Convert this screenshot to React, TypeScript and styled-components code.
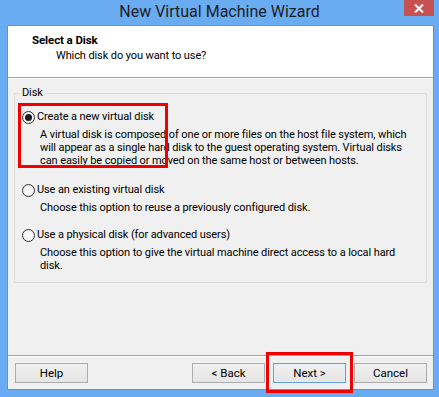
import React from "react"
import styled, { createGlobalStyle } from "styled-components"

const FONT = `"Segoe UI", Roboto, "Liberation Sans", sans-serif`

const GlobalStyle = createGlobalStyle`
  html, body {
    margin: 0;
    padding: 0;
    background: #6aacf2;
  }
  body {
    font-family: ${FONT};
    font-size: 11px;
    letter-spacing: -0.1px;
    color: #000;
  }
`

const Frame = styled.div`
  width: 439px;
  height: 397px;
  box-sizing: border-box;
  display: flex;
  flex-direction: column;
  padding: 0 5px 7px 7px;
  background: #6aacf2;
  overflow: hidden;
`

const TitleBar = styled.div`
  height: 25px;
  flex: none;
  display: grid;
  grid-template-columns: 1fr auto 1fr;
  align-items: start;
  margin-right: -5px;
  margin-left: -7px;
`

const Title = styled.div`
  grid-column: 2;
  font-size: 16px;
  letter-spacing: 0;
  line-height: 24px;
  color: #1e1e1e;
`

const CloseButton = styled.div`
  grid-column: 3;
  justify-self: end;
  margin-right: 5px;
  width: 30px;
  height: 16px;
  background: #c75050;
  display: flex;
  align-items: center;
  justify-content: center;
`

const Client = styled.div`
  flex: 1;
  display: flex;
  flex-direction: column;
  border: 1px solid #5a96da;
  background: #f0f0f0;
`

const Header = styled.div`
  height: 52px;
  flex: none;
  box-sizing: border-box;
  padding: 6px 0 0 24px;
  background: #fff;
  border-bottom: 1px solid #a0a0a0;
  box-shadow: 0 1px 0 #fff;
  margin-bottom: 1px;
`

const HeaderTitle = styled.div`
  font-weight: bold;
  font-size: 11.5px;
  line-height: 16px;
`

const HeaderSub = styled.div`
  line-height: 16px;
  padding-left: 24px;
`

const Body = styled.div`
  flex: 1;
  padding: 6px 6px 0 6px;
`

const GroupBox = styled.fieldset`
  margin: 0;
  padding: 8px 8px 10px 7px;
  height: 198px;
  box-sizing: border-box;
  border: 1px solid #dcdcdc;
  min-width: 0;
`

const Legend = styled.legend`
  padding: 0 2px;
  margin-left: -2px;
  line-height: 16px;
`

const Option = styled.div<{ $gap?: number }>`
  position: relative;
  margin-top: ${p => p.$gap ?? 0}px;
`

const OptionLabel = styled.div`
  display: flex;
  align-items: center;
  gap: 2px;
  height: 16px;
  line-height: 16px;
  white-space: nowrap;
`

const Radio = styled.span<{ $checked?: boolean }>`
  width: 13px;
  height: 13px;
  flex: none;
  box-sizing: border-box;
  border-radius: 50%;
  border: 1px solid #333;
  background: radial-gradient(circle, #fff 0%, #f4f4f4 60%, #dcdcdc 100%);
  display: flex;
  align-items: center;
  justify-content: center;

  &::after {
    content: "";
    display: ${p => (p.$checked ? "block" : "none")};
    width: 7px;
    height: 7px;
    border-radius: 50%;
    background: #1a1a1a;
  }
`

const Description = styled.div`
  margin-top: 3px;
  padding-left: 18px;
  line-height: 13px;
  white-space: nowrap;
`

const Highlight = styled.div<{ $t: number; $l: number; $w: number; $h: number }>`
  position: absolute;
  top: ${p => p.$t}px;
  left: ${p => p.$l}px;
  width: ${p => p.$w}px;
  height: ${p => p.$h}px;
  box-sizing: border-box;
  border: 3px solid #ee0000;
  pointer-events: none;
`

const Footer = styled.div`
  flex: none;
  display: flex;
  align-items: center;
  gap: 8px;
  padding: 7px 6px 6px 7px;
  border-top: 1px solid #a0a0a0;
  box-shadow: inset 0 1px 0 #fff;
`

const Spacer = styled.div`
  flex: 1;
`

const ButtonWrap = styled.div`
  position: relative;
`

const Button = styled.button<{ $default?: boolean }>`
  width: 73px;
  height: 20px;
  box-sizing: border-box;
  padding: 0;
  font-family: ${FONT};
  font-size: 11.5px;
  color: #000;
  border: 1px solid ${p => (p.$default ? "#5d9ee6" : "#acacac")};
  background: linear-gradient(#f0f0f0, #e5e5e5);
  box-shadow: ${p => (p.$default ? "inset 0 0 0 1px #e6f0fb" : "none")};
`

const options = [
  {
    label: "Create a new virtual disk",
    lines: [
      "A virtual disk is composed of one or more files on the host file system, which",
      "will appear as a single hard disk to the guest operating system. Virtual disks",
      "can easily be copied or moved on the same host or between hosts.",
    ],
    checked: true,
    gap: 0,
  },
  {
    label: "Use an existing virtual disk",
    lines: ["Choose this option to reuse a previously configured disk."],
    checked: false,
    gap: 15,
  },
  {
    label: "Use a physical disk (for advanced users)",
    lines: [
      "Choose this option to give the virtual machine direct access to a local hard",
      "disk.",
    ],
    checked: false,
    gap: 13,
  },
]

export default function App() {
  return (
    <>
      <GlobalStyle />
      <Frame>
        <TitleBar>
          <Title>New Virtual Machine Wizard</Title>
          <CloseButton>
            <svg width="10" height="9" viewBox="0 0 10 9">
              <path d="M1 0.5 L9 8.5 M9 0.5 L1 8.5" stroke="#fff" strokeWidth="2" />
            </svg>
          </CloseButton>
        </TitleBar>
        <Client>
          <Header>
            <HeaderTitle>Select a Disk</HeaderTitle>
            <HeaderSub>Which disk do you want to use?</HeaderSub>
          </Header>
          <Body>
            <GroupBox>
              <Legend>Disk</Legend>
              {options.map((o, i) => (
                <Option key={i} $gap={o.gap}>
                  <OptionLabel>
                    <Radio $checked={o.checked} />
                    {o.label}
                  </OptionLabel>
                  <Description>
                    {o.lines.map((l, j) => (
                      <div key={j}>{l}</div>
                    ))}
                  </Description>
                  {i === 0 && <Highlight $t={-6} $l={-4} $w={150} $h={65} />}
                </Option>
              ))}
            </GroupBox>
          </Body>
          <Footer>
            <Button>Help</Button>
            <Spacer />
            <Button>&lt; Back</Button>
            <ButtonWrap>
              <Button $default>Next &gt;</Button>
              <Highlight $t={-11} $l={-7} $w={87} $h={41} />
            </ButtonWrap>
            <Button>Cancel</Button>
          </Footer>
        </Client>
      </Frame>
    </>
  )
}
